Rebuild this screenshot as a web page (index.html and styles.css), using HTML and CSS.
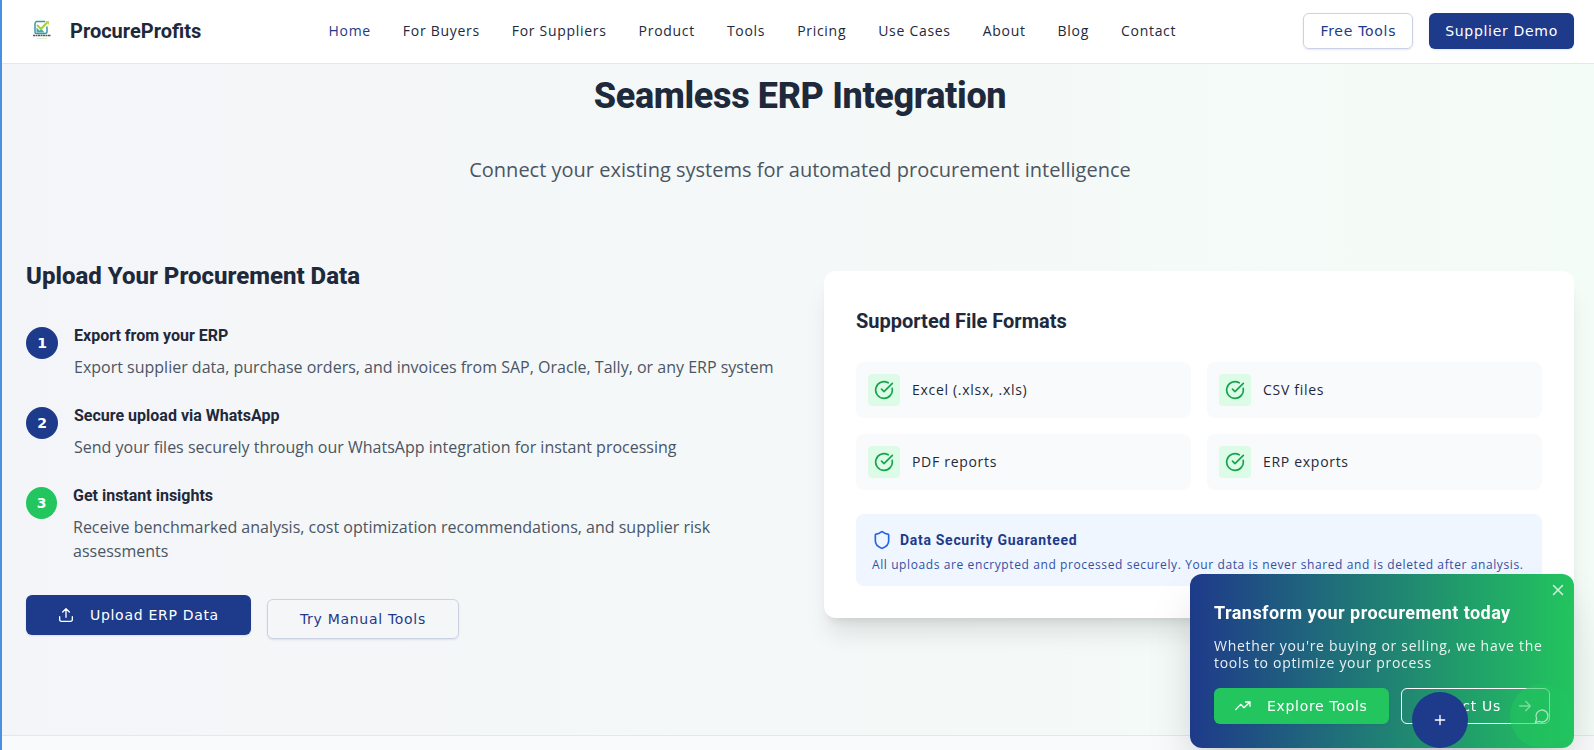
FILE: index.html
```html
<!DOCTYPE html>
<html lang="en">
<head>
<meta charset="utf-8">
<meta name="viewport" content="width=device-width, initial-scale=1">
<title>ProcureProfits</title>
<link rel="stylesheet" href="styles.css">
</head>
<body>
<svg class="sprite" aria-hidden="true">
  <symbol id="check" viewBox="0 0 24 24"><path d="M21.8 10A10 10 0 1 1 17 3.34"/><path d="m9 11 3 3L22 4"/></symbol>
</svg>
<header class="topbar">
  <a class="brand" href="#">
    <svg class="brand-logo" viewBox="0 0 32 32" aria-hidden="true">
      <path d="M19 6.500h-8.500Q9 7 9 9v8q0 1.500 1.500 1.500H19q2 0 2-2v-5" stroke="#3f97a5" stroke-width="1.500"/>
      <path d="M10.500 17.500v-5l3 3 2-1.500 3 3.500z" fill="#4aa9a0"/>
      <path d="m11 10 4 4 6.500-7" stroke="#a5cf3c" stroke-width="2"/>
      <path d="M19 6h4v4z" fill="#c2d944"/>
      <path d="M7 20.500h18" stroke="#4b5a66" stroke-width="1.500" stroke-dasharray="2 .5"/>
      <path d="M11 23.500h10" stroke="#e4efc9" stroke-width="1"/>
    </svg>
    <span>ProcureProfits</span>
  </a>
  <nav class="nav">
    <a class="active" href="#">Home</a><a href="#">For Buyers</a><a href="#">For Suppliers</a><a href="#">Product</a><a href="#">Tools</a><a href="#">Pricing</a><a href="#">Use Cases</a><a href="#">About</a><a href="#">Blog</a><a href="#">Contact</a>
  </nav>
  <div class="actions">
    <button class="btn btn-outline" type="button">Free Tools</button>
    <button class="btn btn-primary" type="button">Supplier Demo</button>
  </div>
</header>

<main class="integration">
  <h2 class="title">Seamless ERP Integration</h2>
  <p class="subtitle">Connect your existing systems for automated procurement intelligence</p>
  <div class="columns">
    <section>
      <h3 class="upload-title">Upload Your Procurement Data</h3>
      <ol class="steps">
        <li class="step"><span class="num">1</span><div><h4>Export from your ERP</h4><p>Export supplier data, purchase orders, and invoices from SAP, Oracle, Tally, or any ERP system</p></div></li>
        <li class="step"><span class="num">2</span><div><h4>Secure upload via WhatsApp</h4><p>Send your files securely through our WhatsApp integration for instant processing</p></div></li>
        <li class="step"><span class="num num-green">3</span><div><h4>Get instant insights</h4><p>Receive benchmarked analysis, cost optimization recommendations, and supplier risk assessments</p></div></li>
      </ol>
      <div class="upload-actions">
        <button class="btn btn-large btn-primary" type="button">
          <svg class="icon" viewBox="0 0 24 24" aria-hidden="true"><path d="M2.500 14.500V19a2.500 2.500 0 0 0 2.500 2.500h14a2.500 2.500 0 0 0 2.500-2.500v-4.500"/><path d="m17 7.500-5-5-5 5M12 2.500v13"/></svg>
          Upload ERP Data</button>
        <button class="btn btn-large btn-outline btn-second" type="button">Try Manual Tools</button>
      </div>
    </section>
    <section class="card">
      <h3 class="card-title">Supported File Formats</h3>
      <ul class="formats">
        <li><span class="tick"><svg viewBox="0 0 24 24"><use href="#check"/></svg></span>Excel (.xlsx, .xls)</li>
        <li><span class="tick"><svg viewBox="0 0 24 24"><use href="#check"/></svg></span>CSV files</li>
        <li><span class="tick"><svg viewBox="0 0 24 24"><use href="#check"/></svg></span>PDF reports</li>
        <li><span class="tick"><svg viewBox="0 0 24 24"><use href="#check"/></svg></span>ERP exports</li>
      </ul>
      <div class="security">
        <h4><svg viewBox="0 0 24 24" aria-hidden="true"><path d="M20 13c0 5-3.500 7.500-7.660 8.950a1 1 0 0 1-.67-.01C7.500 20.500 4 18 4 13V6a1 1 0 0 1 1-1c2 0 4.500-1.200 6.240-2.720a1.170 1.170 0 0 1 1.520 0C14.510 3.810 17 5 19 5a1 1 0 0 1 1 1z"/></svg>Data Security Guaranteed</h4>
        <p>All uploads are encrypted and processed securely. Your data is never shared and is deleted after analysis.</p>
      </div>
    </section>
  </div>
</main>
<footer class="footer"></footer>

<aside class="promo">
  <button class="promo-close" type="button" aria-label="Close"><svg viewBox="0 0 24 24"><path d="M18 6 6 18M6 6l12 12"/></svg></button>
  <h3>Transform your procurement today</h3>
  <p>Whether you're buying or selling, we have the tools to optimize your process</p>
  <div class="promo-actions">
    <button class="btn promo-btn promo-explore" type="button"><svg class="icon" viewBox="0 0 24 24" aria-hidden="true"><path d="m1 17.500 7.500-8 5 5L22.500 6M16 6h6.500v6.500"/></svg>Explore Tools</button>
    <button class="btn promo-btn promo-contact" type="button">Contact Us<svg class="icon" viewBox="0 0 24 24" aria-hidden="true"><path d="M4 12h16M13 5l7 7-7 7"/></svg></button>
  </div>
</aside>
<button class="fab fab-chat" type="button" aria-label="Chat"><svg class="icon" viewBox="0 0 24 24"><path d="M7.900 20A9 9 0 1 0 4 16.100L2 22Z"/></svg></button>
<button class="fab fab-add" type="button" aria-label="Add"><svg class="icon" viewBox="0 0 24 24"><path d="M5 12h14M12 5v14"/></svg></button>
</body>
</html>
```
FILE: styles.css
```css
:root {
  --navy: #1e3a8a;
  --green: #22c55e;
  --ink: #1e293b;
  --muted: #4b5563;
  --heading: Roboto, sans-serif;
  --text: "Open Sans", sans-serif;
  --ui: "DejaVu Sans", sans-serif;
}
* { box-sizing: border-box; margin: 0; padding: 0; }
body {
  min-height: 100vh;
  display: flex;
  flex-direction: column;
  border-left: 2px solid #4a90e2;
  font-family: var(--text);
  color: var(--ink);
  overflow-x: hidden;
}
ul, ol { list-style: none; }
svg { flex: none; fill: none; stroke: currentColor; stroke-width: 2; stroke-linecap: round; stroke-linejoin: round; }
.sprite { display: none; }
.icon { width: 16px; height: 16px; }

.topbar {
  display: flex;
  align-items: center;
  justify-content: space-between;
  height: 64px;
  padding: 0 20px 2px 24px;
  background: #fff;
  border-bottom: 1px solid #e5e7eb;
}
.brand { display: flex; align-items: center; gap: 12px; font: 700 20px/28px var(--heading); color: var(--ink); text-decoration: none; }
.brand-logo { width: 32px; height: 32px; stroke: none; stroke-linecap: butt; }
.nav { display: flex; gap: 32px; }
.nav a { font-size: 14px; line-height: 20px; letter-spacing: 0.05em; color: var(--ink); text-decoration: none; }
.nav .active { color: var(--navy); }
.actions { display: flex; gap: 16px; }

.btn {
  display: flex;
  align-items: center;
  justify-content: center;
  gap: 16px;
  height: 36px;
  padding: 0 16px;
  border: 0;
  border-radius: 6px;
  font: 14px/20px var(--ui);
  letter-spacing: 0.05em;
  white-space: nowrap;
  box-shadow: 0 1px 2px rgb(30 58 138 / 12%);
}
.btn-primary { background: var(--navy); color: #fff; }
.btn-outline { background: transparent; border: 1px solid #cbd2e3; color: var(--navy); }
.btn-large { height: 40px; padding: 0 32px; }
.btn-second { margin-top: 4px; }

.integration { padding: 10px 20px 96px 24px; background: linear-gradient(to right, #f4f5f9, #f4fcf7); }
.title { font: 800 36px/45px var(--heading); letter-spacing: -0.01em; text-align: center; }
.subtitle { margin: 35px 0 75px; font-size: 20px; line-height: 32px; text-align: center; color: var(--muted); }
.columns { display: grid; grid-template-columns: 1fr 1fr; gap: 48px; align-items: start; }
.upload-title { margin-bottom: 32px; font: 800 24px/30px var(--heading); }
.steps { display: grid; gap: 24px; }
.step { display: flex; gap: 16px; }
.num {
  display: flex;
  flex: none;
  align-items: center;
  justify-content: center;
  width: 32px;
  height: 32px;
  margin-top: 4px;
  border-radius: 50%;
  background: var(--navy);
  color: #fff;
  font: 700 14px/20px var(--ui);
}
.num-green { width: 31px; background: var(--green); }
.step h4 { margin-bottom: 6px; font: 700 16px/26px var(--heading); }
.step p { font-size: 16px; line-height: 24px; color: var(--muted); }
.upload-actions { display: flex; align-items: flex-start; gap: 16px; margin-top: 32px; }

.card { margin-top: 10px; padding: 32px; border-radius: 12px; background: #fff; box-shadow: 0 20px 25px -5px rgb(0 0 0 / 10%), 0 8px 10px -6px rgb(0 0 0 / 10%); }
.card-title { margin-bottom: 22px; font: 700 20px/37px var(--heading); }
.formats { display: grid; grid-template-columns: 1fr 1fr; gap: 16px; }
.formats li { display: flex; align-items: center; gap: 12px; padding: 12px; border-radius: 8px; background: #f9fafc; font-size: 14px; line-height: 20px; letter-spacing: 0.05em; }
.tick { display: flex; align-items: center; justify-content: center; width: 32px; height: 32px; border-radius: 4px; background: #dcfce7; color: #16a34a; }
.tick svg { width: 20px; height: 20px; }
.security { margin-top: 24px; padding: 16px 16px 13px; border-radius: 8px; background: #eff6ff; }
.security h4 { display: flex; align-items: center; gap: 8px; margin-bottom: 7px; font: 700 14px/20px var(--heading); letter-spacing: 0.05em; color: var(--navy); }
.security svg { width: 20px; height: 20px; color: #2563eb; }
.security p { font-size: 12px; line-height: 16px; letter-spacing: 0.05em; color: #3350a4; }

.footer { flex: 1; min-height: 14px; border-top: 1px solid #e5e7eb; background: #f9fafc; }

.promo {
  position: fixed;
  right: 20px;
  bottom: 2px;
  width: 384px;
  padding: 24px;
  border-radius: 12px;
  background: linear-gradient(to right, var(--navy), var(--green));
  color: #fff;
  box-shadow: 0 25px 50px -12px rgb(0 0 0 / 25%);
}
.promo h3 { margin-bottom: 9px; font: 700 18px/30px var(--heading); letter-spacing: 0.025em; }
.promo p { margin-bottom: 17px; font-size: 14px; line-height: 17px; letter-spacing: 0.05em; opacity: 0.9; }
.promo-actions { display: flex; gap: 12px; }
.promo-close { position: absolute; top: 7px; right: 7px; border: 0; background: none; color: #fff; opacity: 0.8; }
.promo-close svg { display: block; width: 18px; height: 18px; }
.promo-btn { padding: 0 21px; color: #fff; }
.promo-contact { flex: 1; padding: 0 16px; border: 1px solid #fff; background: transparent; box-shadow: none; }
.promo-explore { background: var(--green); }
.fab { position: fixed; display: flex; align-items: center; justify-content: center; bottom: 2px; border: 0; border-radius: 50%; color: #fff; }
.fab-chat { right: 20px; width: 64px; height: 64px; background: var(--green); opacity: 0.6; }
.fab-add { right: 126px; width: 56px; height: 56px; background: var(--navy); }
```
